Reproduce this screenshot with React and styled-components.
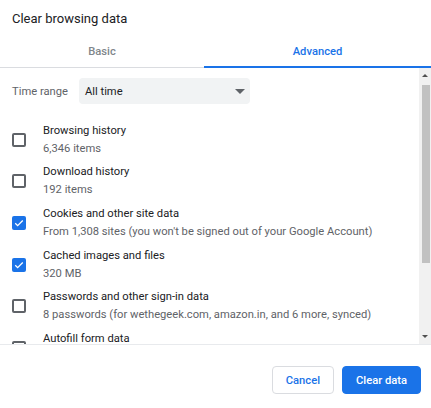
import React from "react";
import styled, { createGlobalStyle } from "styled-components";

const Global = createGlobalStyle`
  html, body { margin: 0; padding: 0; background: #fff; }
  body { font-family: Roboto, "Noto Sans", Arial, sans-serif; -webkit-font-smoothing: antialiased; }
  * { box-sizing: border-box; }
`;

const Dialog = styled.div`
  width: 431px;
  height: 408px;
  display: flex;
  flex-direction: column;
  background: #fff;
  overflow: hidden;
`;

const Title = styled.div`
  height: 36px;
  padding: 10px 12px 0;
  font-size: 13px;
  line-height: 18px;
  color: #202124;
`;

const Tabs = styled.div`
  display: flex;
  height: 32px;
  border-bottom: 1px solid #dadce0;
`;

const Tab = styled.div`
  flex: ${(p) => (p.$active ? "0 0 227px" : "0 0 204px")};
  display: flex;
  align-items: center;
  justify-content: center;
  font-size: 11.2px;
  font-weight: 500;
  color: ${(p) => (p.$active ? "#1a73e8" : "#80868b")};
  border-bottom: 2px solid ${(p) => (p.$active ? "#1a73e8" : "transparent")};
  margin-bottom: -1px;
  padding-top: 0;
`;

const ScrollArea = styled.div`
  flex: 1;
  display: flex;
  min-height: 0;
  border-bottom: 1px solid #e8eaed;
`;

const Content = styled.div`
  flex: 1;
  overflow: hidden;
  padding: 10px 0 0 12px;
`;

const RangeRow = styled.div`
  display: flex;
  align-items: center;
  gap: 11px;
  height: 26px;
  margin-bottom: 15px;
`;

const RangeLabel = styled.span`
  font-size: 11.2px;
  color: #5f6368;
`;

const Select = styled.div`
  width: 171px;
  height: 26px;
  background: #f1f3f4;
  border-radius: 4px;
  display: flex;
  align-items: center;
  justify-content: space-between;
  padding: 0 5px 0 6px;
  font-size: 11.2px;
  color: #202124;
`;

const Caret = styled.span`
  width: 0;
  height: 0;
  border-left: 5px solid transparent;
  border-right: 5px solid transparent;
  border-top: 5px solid #5f6368;
`;

const Row = styled.div`
  display: flex;
  align-items: center;
  height: 41.6px;
  flex-shrink: 0;
`;

const Box = styled.span`
  width: 14px;
  height: 14px;
  border-radius: 2px;
  flex-shrink: 0;
  border: ${(p) => (p.$checked ? "none" : "2px solid #5f6368")};
  background: ${(p) => (p.$checked ? "#1a73e8" : "#fff")};
  display: flex;
  align-items: center;
  justify-content: center;
  margin-right: 17px;
`;

const Texts = styled.div`
  display: flex;
  flex-direction: column;
`;

const ItemTitle = styled.span`
  font-size: 11.2px;
  line-height: 18px;
  color: #202124;
  white-space: nowrap;
`;

const ItemSub = styled.span`
  font-size: 11.2px;
  line-height: 18px;
  color: #5f6368;
  white-space: nowrap;
`;

const Scrollbar = styled.div`
  width: 12px;
  background: #f1f1f1;
  display: flex;
  flex-direction: column;
  align-items: center;
`;

const Arrow = styled.span`
  height: 15px;
  width: 100%;
  display: flex;
  align-items: center;
  justify-content: center;
  &::after {
    content: "";
    width: 0;
    height: 0;
    border-left: 3px solid transparent;
    border-right: 3px solid transparent;
    ${(p) => (p.$down ? "border-top: 3px solid #505050;" : "border-bottom: 3px solid #505050;")}
  }
`;

const Thumb = styled.span`
  width: 8px;
  height: 178px;
  margin-top: 2px;
  background: #c1c1c1;
  margin-left: 1px;
`;

const Spacer = styled.span`
  flex: 1;
`;

const Footer = styled.div`
  display: flex;
  justify-content: flex-end;
  gap: 8px;
  padding: 21px 10px 14px;
`;

const Button = styled.button`
  height: 28px;
  padding: 0 13px;
  border-radius: 4px;
  font-family: Roboto, Arial, sans-serif;
  font-size: 11.2px;
  font-weight: 500;
  cursor: pointer;
  border: 1px solid ${(p) => (p.$primary ? "#1a73e8" : "#dadce0")};
  background: ${(p) => (p.$primary ? "#1a73e8" : "#fff")};
  color: ${(p) => (p.$primary ? "#fff" : "#1a73e8")};
`;

const Check = () => (
  <svg width="12" height="12" viewBox="0 0 24 24">
    <path d="M4.5 12.5l4.8 4.8L19.5 7" fill="none" stroke="#fff" strokeWidth="2.6" />
  </svg>
);

const items = [
  { t: "Browsing history", s: "6,346 items", c: false },
  { t: "Download history", s: "192 items", c: false },
  { t: "Cookies and other site data", s: "From 1,308 sites (you won't be signed out of your Google Account)", c: true },
  { t: "Cached images and files", s: "320 MB", c: true },
  { t: "Passwords and other sign-in data", s: "8 passwords (for wethegeek.com, amazon.in, and 6 more, synced)", c: false },
  { t: "Autofill form data", s: "", c: false },
];

export default function App() {
  return (
    <>
      <Global />
      <Dialog>
        <Title>Clear browsing data</Title>
        <Tabs>
          <Tab>Basic</Tab>
          <Tab $active>Advanced</Tab>
        </Tabs>
        <ScrollArea>
          <Content>
            <RangeRow>
              <RangeLabel>Time range</RangeLabel>
              <Select>
                All time
                <Caret />
              </Select>
            </RangeRow>
            {items.map((it) => (
              <Row key={it.t}>
                <Box $checked={it.c}>{it.c && <Check />}</Box>
                <Texts>
                  <ItemTitle>{it.t}</ItemTitle>
                  <ItemSub>{it.s || "\u00a0"}</ItemSub>
                </Texts>
              </Row>
            ))}
          </Content>
          <Scrollbar>
            <Arrow />
            <Thumb />
            <Spacer />
            <Arrow $down />
          </Scrollbar>
        </ScrollArea>
        <Footer>
          <Button>Cancel</Button>
          <Button $primary>Clear data</Button>
        </Footer>
      </Dialog>
    </>
  );
}
